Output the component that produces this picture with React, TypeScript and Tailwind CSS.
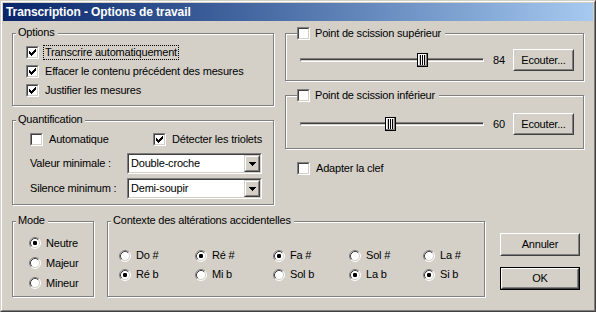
import React from "react";

function Check({ checked }: { checked?: boolean }) {
  return (
    <div className="w-[13px] h-[13px] shrink-0 border border-t-[#808080] border-l-[#808080] border-b-white border-r-white">
      <div className="w-full h-full border border-t-[#404040] border-l-[#404040] border-b-[#d4d0c8] border-r-[#d4d0c8] bg-white flex items-center justify-center">
        {checked && (
          <svg width="7" height="7" viewBox="0 0 7 7" shapeRendering="crispEdges">
            {[2, 3, 4, 3, 2, 1, 0].map((y, x) => (
              <rect key={x} x={x} y={y} width="1" height="3" fill="#000" />
            ))}
          </svg>
        )}
      </div>
    </div>
  );
}

function Radio({ checked }: { checked?: boolean }) {
  return (
    <svg width="12" height="12" viewBox="0 0 12 12" className="shrink-0">
      <circle cx="6" cy="6" r="5" fill="#fff" />
      <path d="M2.11 9.89 A5.5 5.5 0 0 1 9.89 2.11" stroke="#808080" fill="none" />
      <path d="M9.89 2.11 A5.5 5.5 0 0 1 2.11 9.89" stroke="#fff" fill="none" />
      <path d="M2.82 9.18 A4.5 4.5 0 0 1 9.18 2.82" stroke="#404040" fill="none" />
      <path d="M9.18 2.82 A4.5 4.5 0 0 1 2.82 9.18" stroke="#d4d0c8" fill="none" />
      {checked && <rect x="4" y="4" width="4" height="4" rx="1.2" fill="#000" />}
    </svg>
  );
}

function CheckRow({
  checked,
  label,
  focus,
  className = "",
}: {
  checked?: boolean;
  label: string;
  focus?: boolean;
  className?: string;
}) {
  return (
    <div className={`flex items-center h-[15px] ${className}`}>
      <Check checked={checked} />
      <span
        className={`ml-[4px] px-[1px] leading-[13px] whitespace-nowrap border ${
          focus ? "border-dotted border-black" : "border-transparent"
        }`}
      >
        {label}
      </span>
    </div>
  );
}

function RadioRow({ checked, label, className = "" }: { checked?: boolean; label: string; className?: string }) {
  return (
    <div className={`flex items-center ${className}`}>
      <Radio checked={checked} />
      <span className="ml-[5px] leading-[13px] whitespace-nowrap">{label}</span>
    </div>
  );
}

function Group({
  label,
  className = "",
  labelClass = "left-[3px] top-[-8px] pl-[2px] pr-[3px]",
  children,
}: {
  label: React.ReactNode;
  className?: string;
  labelClass?: string;
  children?: React.ReactNode;
}) {
  return (
    <div
      className={`relative border border-[#808080] shadow-[inset_1px_1px_0_#fff,1px_1px_0_#fff] ${className}`}
    >
      <div className={`absolute bg-[#d4d0c8] leading-[13px] flex items-center whitespace-nowrap ${labelClass}`}>
        {label}
      </div>
      {children}
    </div>
  );
}

function Button({
  children,
  className = "",
  isDefault,
}: {
  children: React.ReactNode;
  className?: string;
  isDefault?: boolean;
}) {
  const raised = (
    <div className="w-full h-full border border-t-white border-l-white border-b-[#404040] border-r-[#404040]">
      <div className="w-full h-full border border-t-[#d4d0c8] border-l-[#d4d0c8] border-b-[#808080] border-r-[#808080] flex items-center justify-center">
        {children}
      </div>
    </div>
  );
  if (isDefault) {
    return <div className={`border border-black ${className}`}>{raised}</div>;
  }
  return <div className={className}>{raised}</div>;
}

function Combo({ value }: { value: string }) {
  return (
    <div className="w-[135px] h-[21px] border border-t-[#808080] border-l-[#808080] border-b-white border-r-white">
      <div className="w-full h-full border border-t-[#404040] border-l-[#404040] border-b-[#d4d0c8] border-r-[#d4d0c8] bg-white flex items-center">
        <span className="flex-1 pl-[2px] leading-[13px]">{value}</span>
        <div className="w-[16px] h-full border border-t-[#d4d0c8] border-l-[#d4d0c8] border-b-[#404040] border-r-[#404040]">
          <div className="w-full h-full bg-[#d4d0c8] border border-t-white border-l-white border-b-[#808080] border-r-[#808080] flex items-center justify-center">
            <svg width="7" height="4" viewBox="0 0 7 4" shapeRendering="crispEdges">
              <rect x="0" y="0" width="7" height="1" fill="#000" />
              <rect x="1" y="1" width="5" height="1" fill="#000" />
              <rect x="2" y="2" width="3" height="1" fill="#000" />
              <rect x="3" y="3" width="1" height="1" fill="#000" />
            </svg>
          </div>
        </div>
      </div>
    </div>
  );
}

function Thumb() {
  return (
    <svg width="11" height="14" viewBox="0 0 11 14" shapeRendering="crispEdges">
      <rect x="0" y="0" width="11" height="14" fill="#000" />
      <rect x="1" y="1" width="9" height="12" fill="#fff" />
      <rect x="2" y="2" width="8" height="11" fill="#d4d0c8" />
      <rect x="3" y="2" width="1" height="10" fill="#000" />
      <rect x="5" y="2" width="1" height="10" fill="#000" />
      <rect x="7" y="2" width="1" height="10" fill="#000" />
      <rect x="4" y="2" width="1" height="10" fill="#fff" />
      <rect x="6" y="2" width="1" height="10" fill="#fff" />
      <rect x="9" y="1" width="1" height="12" fill="#808080" />
      <rect x="1" y="12" width="9" height="1" fill="#808080" />
    </svg>
  );
}

function SliderRow({ value, left, className = "" }: { value: number; left: number; className?: string }) {
  return (
    <div className={`flex items-center ${className}`}>
      <div className="relative w-[184px] h-[4px] border border-t-[#808080] border-l-[#808080] border-b-white border-r-white">
        <div className="w-full h-full border-t border-t-[#404040] border-b border-b-[#d4d0c8]" />
        <div className="absolute top-[-6px]" style={{ left: left - 1 }}>
          <Thumb />
        </div>
      </div>
      <div className="ml-[9px] w-[20px] leading-[13px]">{value}</div>
      <Button className="w-[61px] h-[22px]">Ecouter...</Button>
    </div>
  );
}

export default function App() {
  const ctx: [string, boolean][] = [
    ["Do #", false],
    ["Ré #", true],
    ["Fa #", true],
    ["Sol #", false],
    ["La #", false],
    ["Ré b", true],
    ["Mi b", false],
    ["Sol b", false],
    ["La b", true],
    ["Si b", true],
  ];
  return (
    <div className="w-[596px] h-[312px] font-['Liberation_Sans',Arial,sans-serif] text-[11px] tracking-[-0.2px] text-black bg-[#d4d0c8] border border-t-[#d4d0c8] border-l-[#d4d0c8] border-b-[#404040] border-r-[#404040]">
      <div className="h-full border border-t-white border-l-white border-b-[#808080] border-r-[#808080] p-[1px] flex flex-col">
        <div className="h-[18px] shrink-0 bg-gradient-to-r from-[#0a246a] to-[#a6caf0] flex items-center pl-[3px] text-white font-bold text-[12px] tracking-[-0.1px]">
          Transcription - Options de travail
        </div>
        <div className="flex-1 flex flex-col">
          <div className="flex pt-[12px]">
            {/* Left column */}
            <div className="ml-[9px] w-[262px] flex flex-col">
              <Group label="Options" className="h-[73px]">
                <div className="flex flex-col gap-[4px] pt-[11px] pl-[13px]">
                  <CheckRow checked focus label="Transcrire automatiquement" />
                  <CheckRow checked label="Effacer le contenu précédent des mesures" />
                  <CheckRow checked label="Justifier les mesures" />
                </div>
              </Group>
              <Group label="Quantification" className="mt-[14px] h-[85px]">
                <div className="flex flex-col pt-[11px] pl-[17px]">
                  <div className="flex">
                    <CheckRow className="w-[123px]" label="Automatique" />
                    <CheckRow checked label="Détecter les triolets" />
                  </div>
                  <div className="flex items-center mt-[6px]">
                    <div className="w-[97px] leading-[13px]">Valeur minimale :</div>
                    <Combo value="Double-croche" />
                  </div>
                  <div className="flex items-center mt-[4px]">
                    <div className="w-[97px] leading-[13px]">Silence minimum :</div>
                    <Combo value="Demi-soupir" />
                  </div>
                </div>
              </Group>
            </div>
            {/* Right column */}
            <div className="ml-[11px] w-[299px] flex flex-col">
              <Group
                className="h-[48px]"
                labelClass="left-[11px] top-[-7px] pr-[4px]"
                label={
                  <>
                    <Check />
                    <span className="ml-[5px]">Point de scission supérieur</span>
                  </>
                }
              >
                <SliderRow className="mt-[15px] ml-[14px]" value={84} left={117} />
              </Group>
              <Group
                className="mt-[14px] h-[54px]"
                labelClass="left-[11px] top-[-7px] pr-[4px]"
                label={
                  <>
                    <Check />
                    <span className="ml-[5px]">Point de scission inférieur</span>
                  </>
                }
              >
                <SliderRow className="mt-[17px] ml-[14px]" value={60} left={85} />
              </Group>
              <CheckRow className="mt-[12px] ml-[12px]" label="Adapter la clef" />
            </div>
          </div>
          {/* Bottom row */}
          <div className="flex mt-[16px]">
            <Group label="Mode" className="ml-[9px] w-[82px] h-[76px]">
              <div className="flex flex-col pt-[11px] pl-[16px]">
                <RadioRow className="h-[20px]" checked label="Neutre" />
                <RadioRow className="h-[20px]" label="Majeur" />
                <RadioRow className="h-[20px]" label="Mineur" />
              </div>
            </Group>
            <Group label="Contexte des altérations accidentelles" className="ml-[13px] w-[378px] h-[76px]">
              <div className="grid grid-cols-[76px_78px_76px_74px_70px] pt-[24px] pl-[11px]">
                {ctx.map(([l, c]) => (
                  <RadioRow key={l} className="h-[19px]" checked={c} label={l} />
                ))}
              </div>
            </Group>
            <div className="ml-[15px] flex flex-col">
              <Button className="mt-[12px] w-[80px] h-[23px]">Annuler</Button>
              <Button isDefault className="mt-[11px] w-[80px] h-[23px]">
                OK
              </Button>
            </div>
          </div>
        </div>
      </div>
    </div>
  );
}
